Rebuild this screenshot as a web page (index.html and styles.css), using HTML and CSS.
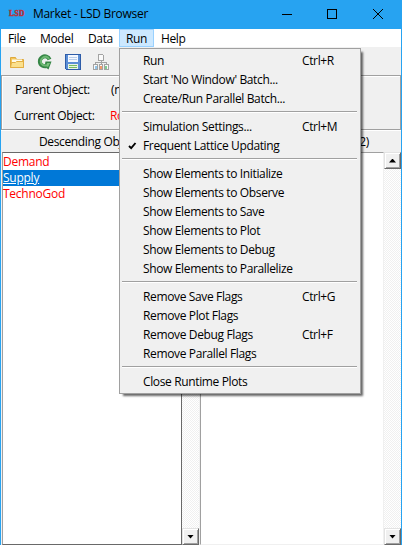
FILE: index.html
```html
<!DOCTYPE html>
<html lang="en">
<head>
<meta charset="utf-8">
<title>Market - LSD Browser</title>
<link rel="stylesheet" href="styles.css">
</head>
<body>
<div class="window">
  <header class="titlebar">
    <span class="logo">LSD</span>
    <span class="title">Market - LSD Browser</span>
    <svg class="controls" width="102" height="12" viewBox="0 0 102 12" fill="none" stroke="#000" shape-rendering="crispEdges">
      <path d="M0 6.500H10M45.500 1.500h9v9h-9z"/>
      <path d="M91 1l10 10M101 1l-10 10" shape-rendering="auto"/>
    </svg>
  </header>
  <nav class="menubar">
    <span class="m-file">File</span><span class="m-model">Model</span><span class="m-data">Data</span><span class="m-run">Run</span><span class="m-help">Help</span>
  </nav>
  <div class="toolbar">
    <svg width="16" height="16" viewBox="0 0 16 16"><path d="M1.500 13.500v-10h5l1 2h7v8z" fill="#f3c65a" stroke="#dfa93c"/><path d="M3 5.500h10v4H3z" fill="#fffbe9"/><path d="M1.500 13.500l1-5h4l1-1h7v6z" fill="#fbe08c" stroke="#e3ae43"/></svg>
    <svg width="16" height="16" viewBox="0 0 16 16"><path d="M12.500 5.500C11.500 2.500 8 1.500 5.200 3.200 2 5.200 2.200 10 5.200 11.600c1.300.7 2.600.8 4 .6" fill="none" stroke="#368646" stroke-width="4"/><path d="M8.500 7.500h6l-3 8-4-3z" fill="#368646"/><path d="M12 5C10.800 2.700 8 2 5.700 3.700 3 5.700 3.300 9.500 5.700 10.900c1.200.7 2.800.8 4.600.3" fill="none" stroke="#6db873" stroke-width="2"/><path d="M10 9h3l-2 4-1.500-1z" fill="#7bc37d"/></svg>
    <svg width="16" height="16" viewBox="0 0 16 16" shape-rendering="crispEdges"><path d="M.5.5h15v15h-14l-1-1z" fill="#5b8ed6" stroke="#2e5ca8"/><path d="M3 1h10v7H3z" fill="#f4f8ff"/><path d="M4 3h8v1H4zM4 5h8v1H4z" fill="#b9cdea"/><path d="M3 10h10v5H3z" fill="#e8f3e6"/><path d="M4 11h8v1H4zM4 13h8v1H4z" fill="#78bd62"/></svg>
    <svg width="16" height="16" viewBox="0 0 16 16" shape-rendering="crispEdges" fill="#fafafa" stroke="#a3a3a3"><path d="M5.500.5h4l1 1v5h-5z"/><path d="M8 7v3M2.500 10V8.500h11V10" fill="none"/><path d="M.5 10.500h4v5h-4zM6.500 10.500h3v5h-3zM11.500 10.500h4v5h-4z"/><path d="M2 12h2v3H2z" fill="#91c3e8" stroke="none"/><path d="M7 12h2v3H7z" fill="#f29a69" stroke="none"/><path d="M12 12h2v3h-2z" fill="#81cc91" stroke="none"/></svg>
  </div>
  <section class="info">
    <div class="field"><span class="label">Parent Object:</span><span>(none)</span></div>
    <div class="field current"><span class="label">Current Object:</span><span class="red">Root</span></div>
  </section>
  <div class="headings"><span class="left-head">Descending Objects</span><span>(2)</span></div>
  <main class="panes">
    <ul class="list">
      <li>Demand</li><li class="selected">Supply</li><li>TechnoGod</li>
    </ul>
    <div class="scroll first"><span class="arrow up"></span><span class="arrow down"></span></div>
    <div class="list second"></div>
    <div class="scroll"><span class="arrow up"></span><span class="arrow down"></span></div>
  </main>
</div>
<div class="menu">
  <div class="item"><span>Run</span><kbd>Ctrl+R</kbd></div>
  <div class="item"><span>Start 'No Window' Batch...</span></div>
  <div class="item"><span>Create/Run Parallel Batch...</span></div>
  <hr>
  <div class="item"><span>Simulation Settings...</span><kbd>Ctrl+M</kbd></div>
  <div class="item checked"><svg class="check" width="9" height="8" viewBox="0 0 9 8"><path d="M1 4l2.200 2.200L7.500 1" fill="none" stroke="#000" stroke-width="1.900"/></svg><span>Frequent Lattice Updating</span></div>
  <hr>
  <div class="item"><span>Show Elements to Initialize</span></div>
  <div class="item"><span>Show Elements to Observe</span></div>
  <div class="item"><span>Show Elements to Save</span></div>
  <div class="item"><span>Show Elements to Plot</span></div>
  <div class="item"><span>Show Elements to Debug</span></div>
  <div class="item"><span>Show Elements to Parallelize</span></div>
  <hr>
  <div class="item"><span>Remove Save Flags</span><kbd>Ctrl+G</kbd></div>
  <div class="item"><span>Remove Plot Flags</span></div>
  <div class="item"><span>Remove Debug Flags</span><kbd>Ctrl+F</kbd></div>
  <div class="item"><span>Remove Parallel Flags</span></div>
  <hr>
  <div class="item"><span>Close Runtime Plots</span></div>
</div>
</body>
</html>
```
FILE: styles.css
```css
* { box-sizing: border-box; }
body {
  margin: 0;
  font: 12px/16px "Open Sans", "Noto Sans", sans-serif;
  letter-spacing: -0.36px;
  color: #000;
  white-space: nowrap;
  overflow: hidden;
}
.window {
  width: 402px;
  height: 545px;
  display: flex;
  flex-direction: column;
  background: #f0f0f0;
  border: solid #27a3f1;
  border-width: 0 1px;
}
.titlebar {
  height: 29px;
  background: #27a3f1;
  display: flex;
  align-items: center;
  padding: 0 17px 2px 8px;
}
.logo {
  width: 24px;
  font: bold 7.5px/8px "Liberation Serif", serif;
  letter-spacing: 0.4px;
  color: #b8323c;
  -webkit-text-stroke: 0.5px #b8323c;
}
.title { letter-spacing: -0.3px; }
.controls { margin-left: auto; }
.menubar {
  height: 18px;
  background: #fff;
  display: flex;
  line-height: 19px;
}
.menubar span { padding-left: 7px; }
.m-file { width: 32px; }
.m-model { width: 48px; }
.m-data { width: 38px; }
.menubar .m-run {
  width: 35px;
  line-height: 17px;
  padding-left: 6px;
  background: #cce8ff;
  border: 1px solid #99d1ff;
}
.toolbar {
  height: 28px;
  display: flex;
  gap: 12px;
  padding: 7px 8px;
}
.info {
  height: 55px;
  border: 1px solid #a0a0a0;
  box-shadow: inset 1px 1px #fff, 0 1px #fff;
  padding: 6px 13px;
}
.field { display: flex; height: 26px; }
.label { width: 96px; }
.current { margin-left: -1px; }
.red { color: #f00; }
.headings {
  height: 22px;
  display: flex;
  justify-content: space-between;
  padding: 4px 32px 0 38px;
}
.panes { display: flex; height: 393px; }
.list {
  width: 180px;
  margin: 0 0 0 1px;
  padding: 1px 0 0;
  list-style: none;
  background: #fff;
  border: 1px solid #696969;
  border-left-color: #a0a0a0;
  letter-spacing: -0.25px;
  color: #f00;
}
.list li { height: 16px; line-height: 16px; }
.list .selected {
  color: #fff;
  background: #0078d7;
  text-decoration: underline;
}
.second {
  width: 184px;
  margin: 0;
  border-color: #a0a0a0 #f0f0f0 #f0f0f0 #a0a0a0;
}
.scroll {
  width: 17px;
  display: flex;
  flex-direction: column;
  justify-content: space-between;
  background: repeating-conic-gradient(#fff 0 25%, #f0f0f0 0 50%) 0 0 / 2px 2px;
}
.first { width: 18px; border-right: 1px solid #f0f0f0; }
.arrow {
  height: 17px;
  display: grid;
  place-items: center;
  background: #f0f0f0;
  border: 1px solid;
  border-color: #e3e3e3 #696969 #696969 #e3e3e3;
  box-shadow: inset 1px 1px #fff, inset -1px -1px #a0a0a0;
}
.arrow::before {
  content: "";
  width: 7px;
  height: 4px;
  background: #000;
  clip-path: polygon(50% 0, 100% 100%, 0 100%);
}
.down::before { clip-path: polygon(0 0, 100% 0, 50% 100%); }
.menu {
  position: absolute;
  left: 119px;
  top: 48px;
  width: 242px;
  height: 346px;
  padding: 2px 2px;
  background: #f0f0f0;
  border: 1px solid #a0a0a0;
  box-shadow: 3px 3px 2px -1px rgba(0, 0, 0, 0.6);
}
.item {
  height: 19px;
  line-height: 19px;
  display: flex;
  align-items: center;
  padding-left: 21px;
}
.item span { width: 159px; }
.item kbd { font: inherit; }
.checked { padding-left: 6px; }
.check { margin-right: 6px; }
.menu hr {
  height: 2px;
  margin: 3px 1px 4px 0;
  border: 0;
  background: linear-gradient(#a0a0a0 50%, #fff 50%);
}
```
